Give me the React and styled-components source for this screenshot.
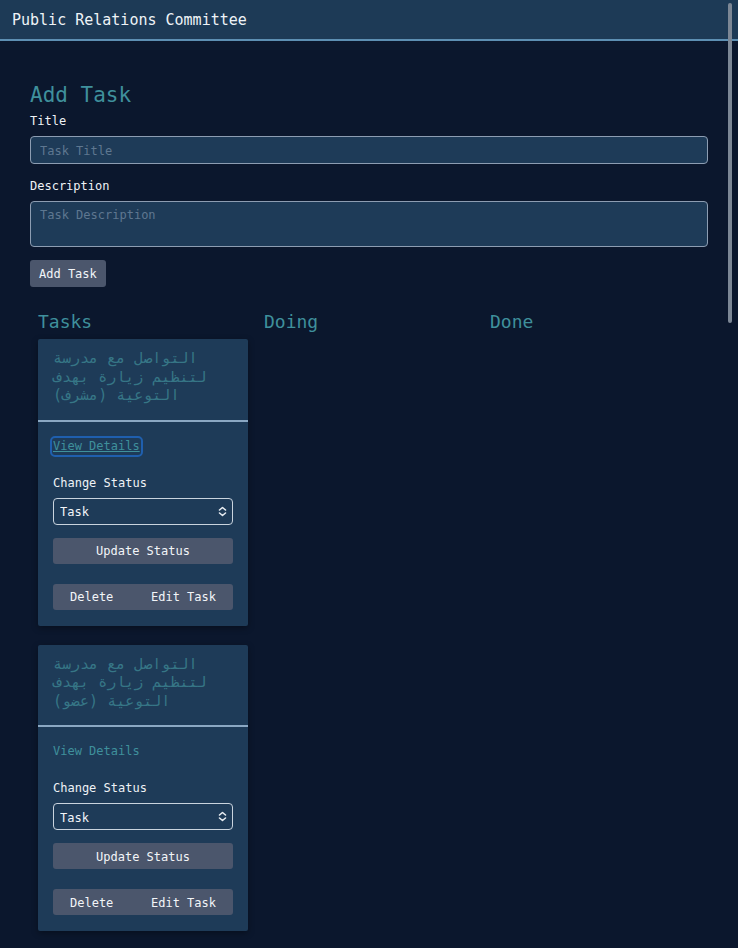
import React from "react";
import styled, { createGlobalStyle } from "styled-components";

const Global = createGlobalStyle`
  html, body { margin: 0; padding: 0; height: 100%; overflow: hidden; }
  body {
    background: #0b172d;
    color: #e6edf3;
    font-family: "DejaVu Sans Mono", "Liberation Mono", monospace;
  }
  * { box-sizing: border-box; }
`;

const Header = styled.header`
  height: 41px;
  background: #1d3a56;
  border-bottom: 2px solid #5d8fb3;
  display: flex;
  align-items: center;
  padding: 0 12px;
  font-size: 15px;
  color: #eef3f7;
`;

const Main = styled.main`
  padding: 42px 30px 40px;
`;

const Heading = styled.h2`
  margin: 0;
  font-size: 21px;
  font-weight: normal;
  line-height: 25px;
  color: #3f909c;
`;

const Label = styled.label`
  display: block;
  font-size: 12px;
  line-height: 14px;
  color: #eef2f6;
  margin-top: ${(p) => p.$mt || 0}px;
`;

const Input = styled.input`
  display: block;
  width: 100%;
  height: 28px;
  margin-top: 8px;
  background: #1e3b58;
  border: 1.5px solid #8d9db2;
  border-radius: 4px;
  padding: 1px 9px 0;
  font-family: inherit;
  font-size: 12px;
  color: #e6edf3;
  &::placeholder { color: #5e7790; }
`;

const TextArea = styled.textarea`
  display: block;
  width: 100%;
  height: 46px;
  margin-top: 8px;
  background: #1e3b58;
  border: 1.5px solid #8d9db2;
  border-radius: 4px;
  padding: 6px 9px;
  resize: none;
  font-family: inherit;
  font-size: 12px;
  color: #e6edf3;
  &::placeholder { color: #5e7790; }
`;

const Button = styled.button`
  display: ${(p) => (p.$block ? "flex" : "inline-flex")};
  align-items: center;
  justify-content: center;
  width: ${(p) => (p.$block ? "100%" : "auto")};
  height: ${(p) => p.$h || 26}px;
  padding: 1px 9px 0;
  margin-top: ${(p) => p.$mt || 0}px;
  background: #4b566c;
  border: none;
  border-radius: 3px;
  font-family: inherit;
  font-size: 12px;
  color: #f2f5f8;
  white-space: nowrap;
`;

const Board = styled.div`
  display: grid;
  grid-template-columns: repeat(3, 1fr);
  margin-top: 24px;
`;

const Column = styled.section`
  padding: 0 8px;
  display: flex;
  flex-direction: column;
  gap: 19px;
`;

const ColumnTitle = styled.h3`
  margin: 0 0 -13px;
  font-size: 18px;
  font-weight: normal;
  line-height: 22px;
  color: #3f909c;
`;

const Card = styled.article`
  background: #1e3b58;
  border-radius: 2px;
  box-shadow: 0 2px 6px rgba(0, 0, 0, 0.35);
`;

const CardTop = styled.div`
  padding: 10px 15px 15px;
  border-bottom: 2px solid #8ba8c3;
`;

const CardTitle = styled.h4`
  margin: 0;
  font-size: 15px;
  font-weight: normal;
  line-height: 18.5px;
  color: #367686;
  text-align: left;
`;

const CardBody = styled.div`
  padding: 13px 15px 16px;
`;

const DetailsLink = styled.a`
  display: inline-block;
  font-size: 12px;
  line-height: 15px;
  color: #3f909c;
  text-decoration: ${(p) => (p.$focused ? "underline" : "none")};
  outline: ${(p) => (p.$focused ? "2px solid #1f5fae" : "none")};
  border-radius: 2px;
  outline-offset: 1px;
`;

const SelectWrap = styled.div`
  position: relative;
  margin-top: 8px;
`;

const Select = styled.select`
  appearance: none;
  display: block;
  width: 100%;
  height: 27px;
  background: #1e3b58;
  border: 1.5px solid #c9d3de;
  border-radius: 4px;
  padding: 2px 6px 0;
  font-family: inherit;
  font-size: 12px;
  color: #f2f5f8;
`;

const Chevron = styled.svg`
  position: absolute;
  right: 6px;
  top: 8px;
  pointer-events: none;
`;

const ButtonGroup = styled.div`
  display: flex;
  justify-content: space-between;
  height: 26px;
  margin-top: 20px;
  background: #4b566c;
  border-radius: 3px;
`;

const GroupButton = styled.button`
  background: transparent;
  border: none;
  padding: 1px 17px 0;
  font-family: inherit;
  font-size: 12px;
  color: #f2f5f8;
  white-space: nowrap;
`;

const ScrollThumb = styled.div`
  position: fixed;
  top: 3px;
  right: 6px;
  width: 4px;
  height: 320px;
  border-radius: 2px;
  background: #7c8795;
`;

const tasks = [
  { title: "التواصل مع مدرسة لتنظيم زيارة بهدف التوعية (مشرف)", focused: true },
  { title: "التواصل مع مدرسة لتنظيم زيارة بهدف التوعية (عضو)", focused: false },
];

function TaskCard({ title, focused }) {
  return (
    <Card>
      <CardTop>
        <CardTitle>{title}</CardTitle>
      </CardTop>
      <CardBody>
        <DetailsLink href="#" $focused={focused}>View Details</DetailsLink>
        <Label $mt={22}>Change Status</Label>
        <SelectWrap>
          <Select defaultValue="task">
            <option value="task">Task</option>
            <option value="doing">Doing</option>
            <option value="done">Done</option>
          </Select>
          <Chevron width="9" height="11" viewBox="0 0 9 11" fill="none">
            <path d="M1.5 4 L4.5 1.5 L7.5 4" stroke="#e8edf2" strokeWidth="1.6" strokeLinecap="round" strokeLinejoin="round" />
            <path d="M1.5 7 L4.5 9.5 L7.5 7" stroke="#e8edf2" strokeWidth="1.6" strokeLinecap="round" strokeLinejoin="round" />
          </Chevron>
        </SelectWrap>
        <Button $block $mt={13}>Update Status</Button>
        <ButtonGroup>
          <GroupButton>Delete</GroupButton>
          <GroupButton>Edit Task</GroupButton>
        </ButtonGroup>
      </CardBody>
    </Card>
  );
}

export default function App() {
  return (
    <>
      <Global />
      <Header>Public Relations Committee</Header>
      <Main>
        <Heading>Add Task</Heading>
        <Label $mt={6}>Title</Label>
        <Input placeholder="Task Title" />
        <Label $mt={15}>Description</Label>
        <TextArea placeholder="Task Description" />
        <Button $mt={13} $h={27}>Add Task</Button>
        <Board>
          <Column>
            <ColumnTitle>Tasks</ColumnTitle>
            {tasks.map((t, i) => (
              <TaskCard key={i} {...t} />
            ))}
          </Column>
          <Column>
            <ColumnTitle>Doing</ColumnTitle>
          </Column>
          <Column>
            <ColumnTitle>Done</ColumnTitle>
          </Column>
        </Board>
      </Main>
      <ScrollThumb />
    </>
  );
}
